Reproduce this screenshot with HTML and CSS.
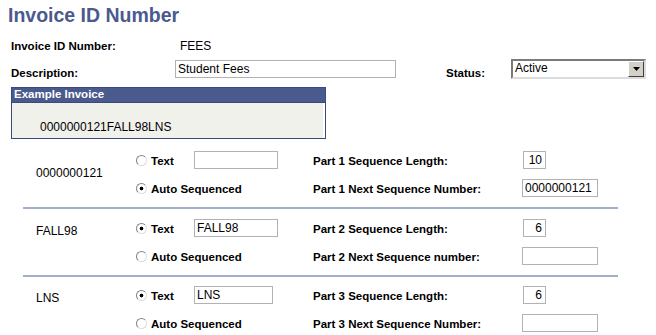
FILE: index.html
```html
<!DOCTYPE html>
<html lang="en">
<head>
    <meta charset="UTF-8">
    <title>Invoice ID Number</title>
    <link rel="stylesheet" href="styles.css">
</head>
<body>
    <div class="page">
        <h1 class="page-title">Invoice ID Number</h1>

        <div class="info-row id-row">
            <span class="label id-label">Invoice ID Number:</span>
            <span class="value">FEES</span>
        </div>

        <div class="info-row desc-row">
            <span class="label desc-label">Description:</span>
            <input class="field desc-field" type="text" value="Student Fees">
            <span class="label status-label">Status:</span>
            <div class="select">
                <span class="select-value">Active</span>
                <span class="select-button">
                    <svg width="7" height="4" viewBox="0 0 7 4"><path d="M0 0h7L3.5 4z" fill="#000"/></svg>
                </span>
            </div>
        </div>

        <div class="example">
            <div class="example-head">Example Invoice</div>
            <div class="example-body">0000000121FALL98LNS</div>
        </div>

        <div class="parts">
            <div class="part part-1">
                <div class="part-id">0000000121</div>
                <label class="choice"><input class="radio" type="radio" name="p1"><span class="label">Text</span></label>
                <input class="field text-field" type="text" value="">
                <span class="label part-label">Part 1 Sequence Length:</span>
                <input class="field num-field" type="text" value="10">
                <label class="choice auto"><input class="radio" type="radio" name="p1" checked><span class="label">Auto Sequenced</span></label>
                <span class="label part-label">Part 1 Next Sequence Number:</span>
                <input class="field next-field" type="text" value="0000000121">
            </div>

            <div class="part">
                <div class="part-id">FALL98</div>
                <label class="choice"><input class="radio" type="radio" name="p2" checked><span class="label">Text</span></label>
                <input class="field text-field" type="text" value="FALL98">
                <span class="label part-label">Part 2 Sequence Length:</span>
                <input class="field num-field" type="text" value="6">
                <label class="choice auto"><input class="radio" type="radio" name="p2"><span class="label">Auto Sequenced</span></label>
                <span class="label part-label">Part 2 Next Sequence number:</span>
                <input class="field next-field" type="text" value="">
            </div>

            <div class="part part-3">
                <div class="part-id">LNS</div>
                <label class="choice"><input class="radio" type="radio" name="p3" checked><span class="label">Text</span></label>
                <input class="field text-field short" type="text" value="LNS">
                <span class="label part-label">Part 3 Sequence Length:</span>
                <input class="field num-field" type="text" value="6">
                <label class="choice auto"><input class="radio" type="radio" name="p3"><span class="label">Auto Sequenced</span></label>
                <span class="label part-label">Part 3 Next Sequence Number:</span>
                <input class="field next-field" type="text" value="">
            </div>
        </div>
    </div>
</body>
</html>
```

FILE: styles.css
```css
* {
    margin: 0;
    padding: 0;
    box-sizing: border-box;
}

body {
    font-family: 'Liberation Sans', Arial, sans-serif;
    font-size: 12px;
    color: #000;
    background: #fff;
}

.page {
    width: 656px;
}

.page-title {
    padding: 4px 0 0 8px;
    font-size: 19.5px;
    line-height: 22px;
    font-weight: bold;
    color: #4b5a8d;
}

.label {
    font-weight: bold;
    font-size: 11.5px;
}

/* top fields */
.info-row {
    display: flex;
    padding-left: 11px;
}

.id-row {
    margin-top: 13px;
    align-items: baseline;
    line-height: 14px;
}

.id-label {
    width: 169px;
}

.desc-row {
    margin-top: 7px;
    height: 18px;
    align-items: flex-start;
}

.desc-label,
.status-label {
    padding-top: 6px;
    line-height: 14px;
}

.desc-label {
    width: 164px;
}

.status-label {
    width: 65px;
    margin-left: 50px;
}

.field {
    height: 18px;
    border: 1px solid #b2b2b2;
    background: #fff;
    font-family: 'Liberation Sans', Arial, sans-serif;
    font-size: 12px;
    padding: 0 2px;
    color: #000;
    outline: none;
}

.desc-field {
    width: 221px;
}

.select {
    display: flex;
    width: 135px;
    height: 20px;
    margin-top: -1px;
    border: 2px solid;
    border-color: #7b7b7b #dcdcdc #dcdcdc #7b7b7b;
    background: #fff;
}

.select-value {
    flex: 1;
    line-height: 15px;
    padding-left: 2px;
}

.select-button {
    display: flex;
    align-items: center;
    justify-content: center;
    width: 16px;
    background: #d4d0c8;
    border: 1px solid;
    border-color: #fff #404040 #404040 #fff;
}

/* example invoice box */
.example {
    margin: 9px 0 0 11px;
    width: 315px;
    border: 1px solid #3b4a7b;
}

.example-head {
    height: 15px;
    line-height: 13px;
    padding-left: 2px;
    background: #4b5a8d;
    border-bottom: 1px solid #3b4a7b;
    color: #fff;
    font-weight: bold;
    font-size: 11.5px;
}

.example-body {
    height: 35px;
    padding: 17px 0 0 28px;
    line-height: 14px;
    background: #f1f1ec;
    border-right: 2px solid #fff;
}

/* sequence parts */
.parts {
    margin: 12px 0 0 23px;
    width: 595px;
}

.part {
    display: grid;
    grid-template-columns: 113px 58px 119px 209px 1fr;
    grid-template-rows: 28px 28px;
    align-items: start;
    border-top: 2px solid #a3b0cd;
    padding-top: 10px;
}

.part-1 {
    border-top: none;
    padding-top: 0;
}

.part-3 {
    padding-top: 9px;
}

.part-id {
    grid-row: 1 / 3;
    padding: 5px 0 0 13px;
    line-height: 14px;
}

.part-1 .part-id {
    padding-top: 15px;
}

.choice {
    display: flex;
    align-items: flex-start;
    gap: 4px;
    line-height: 20px;
}

.choice.auto {
    grid-column: 2 / 4;
}

.part-label {
    line-height: 20px;
}

.radio {
    appearance: none;
    width: 11px;
    height: 11px;
    margin-top: 4px;
    border-radius: 50%;
    border: 1px solid;
    border-color: #858585 #dedede #dedede #858585;
    background: #fff;
}

.radio:checked {
    background: radial-gradient(circle, #000 0 1.6px, #fff 2.2px);
}

.text-field {
    width: 84px;
}

.text-field.short {
    width: 79px;
}

.num-field {
    width: 23px;
    margin-left: 1px;
    text-align: right;
    padding-right: 3px;
}

.next-field {
    width: 76px;
}
```
